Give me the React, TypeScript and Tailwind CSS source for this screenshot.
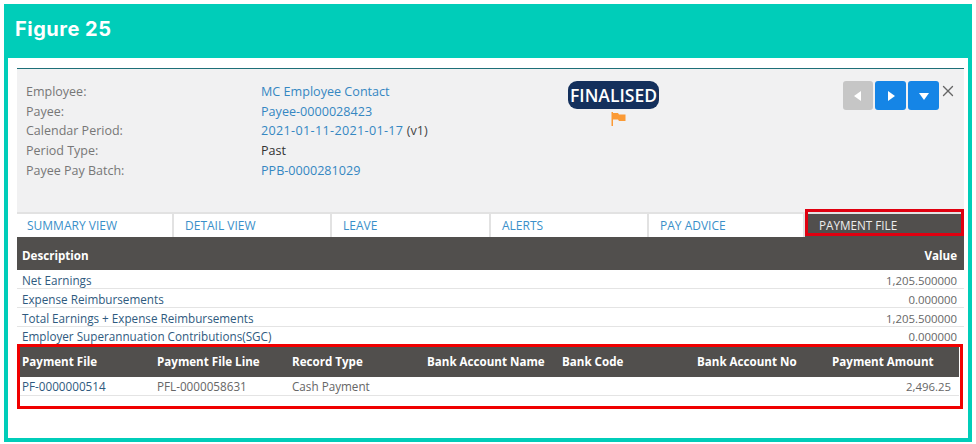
import { X } from "lucide-react"

const font = "font-['Open_Sans','Noto_Sans',sans-serif]"

const info = [
    { label: "Employee:", value: "MC Employee Contact", link: true },
    { label: "Payee:", value: "Payee-0000028423", link: true },
    { label: "Calendar Period:", value: "2021-01-11-2021-01-17", link: true, extra: " (v1)" },
    { label: "Period Type:", value: "Past", link: false },
    { label: "Payee Pay Batch:", value: "PPB-0000281029", link: true },
]

const tabs = [
    { name: "SUMMARY VIEW", cls: "w-[157px] pl-[10px]" },
    { name: "DETAIL VIEW", cls: "w-[158px] pl-[11px]" },
    { name: "LEAVE", cls: "w-[159px] pl-[11px]" },
    { name: "ALERTS", cls: "w-[158px] pl-[11px]" },
    { name: "PAY ADVICE", cls: "w-[156px] pl-[11px]" },
]

const summary = [
    ["Net Earnings", "1,205.500000"],
    ["Expense Reimbursements", "0.000000"],
    ["Total Earnings + Expense Reimbursements", "1,205.500000"],
]

const columns = [
    { name: "Payment File", w: "w-[135px]" },
    { name: "Payment File Line", w: "w-[135px]" },
    { name: "Record Type", w: "w-[135px]" },
    { name: "Bank Account Name", w: "w-[135px]" },
    { name: "Bank Code", w: "w-[135px]" },
    { name: "Bank Account No", w: "w-[135px]" },
    { name: "Payment Amount", w: "w-[127px]" },
]

function Triangle({ dir }: { dir: "left" | "right" | "down" }) {
    const points = dir === "left" ? "9,1 9,11 2,6" : dir === "right" ? "3,1 3,11 10,6" : "1,3 11,3 6,10"
    return (
        <svg width="12" height="12" viewBox="0 0 12 12">
            <polygon points={points} fill="#fff" />
        </svg>
    )
}

export default function App() {
    return (
        <div className={`${font} w-[976px] h-[444px] bg-white pt-1 px-1 overflow-hidden`}>
            <div className="h-[54px] bg-[#00cdb9] flex items-center pl-[11px] pb-[4px]">
                <h1 className="text-white text-[20px] font-bold font-['Inter',sans-serif] tracking-[0.5px]">Figure 25</h1>
            </div>
            <div className="h-[380px] border-x-4 border-[#00cdb9] bg-white pt-[10px] pl-[9px] pr-1">
                <div className="relative w-[947px]">
                    <div className="h-[144px] bg-[#f1f1f2] border-t border-[#1d6f78] pt-[12px] pl-[9px] flex">
                        <div className="w-[235px] pt-[1px] text-[12.5px] leading-[19.7px] text-[#777]">
                            {info.map((row) => (
                                <div key={row.label}>{row.label}</div>
                            ))}
                        </div>
                        <div className="w-[307px] pt-[1px] text-[12.6px] leading-[19.7px]">
                            {info.map((row) => (
                                <div key={row.label} className={row.link ? "text-[#3587c2]" : "text-[#333]"}>
                                    <span className={row.extra ? "tracking-[0.33px]" : ""}>{row.value}</span>
                                    {row.extra && <span className="text-[#444]">{row.extra}</span>}
                                </div>
                            ))}
                        </div>
                        <div className="w-[91px] flex flex-col items-center">
                            <div className="w-[91px] h-[28px] rounded-[9px] bg-[#14305c] text-white text-[17.5px] font-semibold flex items-center justify-center">
                                FINALISED
                            </div>
                            <svg className="mt-[3px] ml-[10px]" width="15" height="15" viewBox="0 0 15 15">
                                <rect x="0.5" y="0" width="1.5" height="14" fill="#fb9a35" />
                                <path d="M2 1 L7 1 L8 2.5 L14.5 2.5 L14.5 9 L8 9 L7 7.5 L2 7.5 Z" fill="#fb9a35" />
                            </svg>
                        </div>
                        <div className="ml-[184px] flex gap-[2px] items-start">
                            <div className="w-[30px] h-[29px] rounded-[3px] bg-[#c6c6c6] flex items-center justify-center"><Triangle dir="left" /></div>
                            <div className="w-[31px] h-[29px] rounded-[3px] bg-[#1585e6] flex items-center justify-center"><Triangle dir="right" /></div>
                            <div className="w-[31px] h-[29px] rounded-[3px] bg-[#1585e6] flex items-center justify-center"><Triangle dir="down" /></div>
                            <X className="-ml-[2px] mt-[1px] text-[#666]" size={18} strokeWidth={1.8} />
                        </div>
                    </div>
                    <div className="h-[25px] flex border-t-2 border-[#e2e2e2] bg-white text-[12px]">
                        {tabs.map((tab) => (
                            <div key={tab.name} className={`${tab.cls} border-r-2 border-[#e2e2e2] pt-[3px] text-[#3a8fc9]`}>
                                {tab.name}
                            </div>
                        ))}
                        <div className="flex-1 bg-[#514f4d] pl-[14px] pt-[3px] text-[11.7px] text-[#eee]">PAYMENT FILE</div>
                    </div>
                    <div className="h-[33px] bg-[#514f4d] flex items-center justify-between pl-[5px] pr-[7px] pt-[5px] text-white text-[11.6px] font-bold">
                        <span>Description</span>
                        <span>Value</span>
                    </div>
                    <div className="text-[11.7px]">
                        {summary.map(([name, value]) => (
                            <div key={name} className="h-[19px] pt-[3px] border-b border-[#e4e4e4] flex items-center justify-between pl-[5px] pr-[7px]">
                                <span className="text-[#2f5a7e]">{name}</span>
                                <span className="text-[#666] text-[11.4px]">{value}</span>
                            </div>
                        ))}
                        <div className="h-[17px] pt-[3px] flex items-center justify-between pl-[5px] pr-[7px]">
                            <span className="text-[#2f5a7e]">Employer Superannuation Contributions(SGC)</span>
                            <span className="text-[#666] text-[11.4px]">0.000000</span>
                        </div>
                    </div>
                    <div className="ml-[3px] mt-[3px] w-[939px]">
                        <div className="h-[30px] bg-[#514f4d] flex items-center pl-[2px] text-white text-[11.6px] font-bold">
                            {columns.map((col) => (
                                <div key={col.name} className={col.w}>{col.name}</div>
                            ))}
                        </div>
                        <div className="h-[19px] pt-[2px] border-b border-[#e4e4e4] flex items-center pl-[2px] text-[11.7px] text-[#666]">
                            <div className="w-[135px] text-[#2f5a7e]">PF-0000000514</div>
                            <div className="w-[135px]">PFL-0000058631</div>
                            <div className="w-[135px]">Cash Payment</div>
                            <div className="ml-auto pr-[8px] text-[11.4px]">2,496.25</div>
                        </div>
                    </div>
                    <div className="absolute left-0 top-[276px] w-[946px] h-[65px] border-[3px] border-[#f00000]" />
                    <div className="absolute left-[788px] top-[141px] w-[159px] h-[27px] border-[3px] border-[#e00010]" />
                </div>
            </div>
            <div className="h-1 bg-[#00cdb9]" />
        </div>
    )
}
